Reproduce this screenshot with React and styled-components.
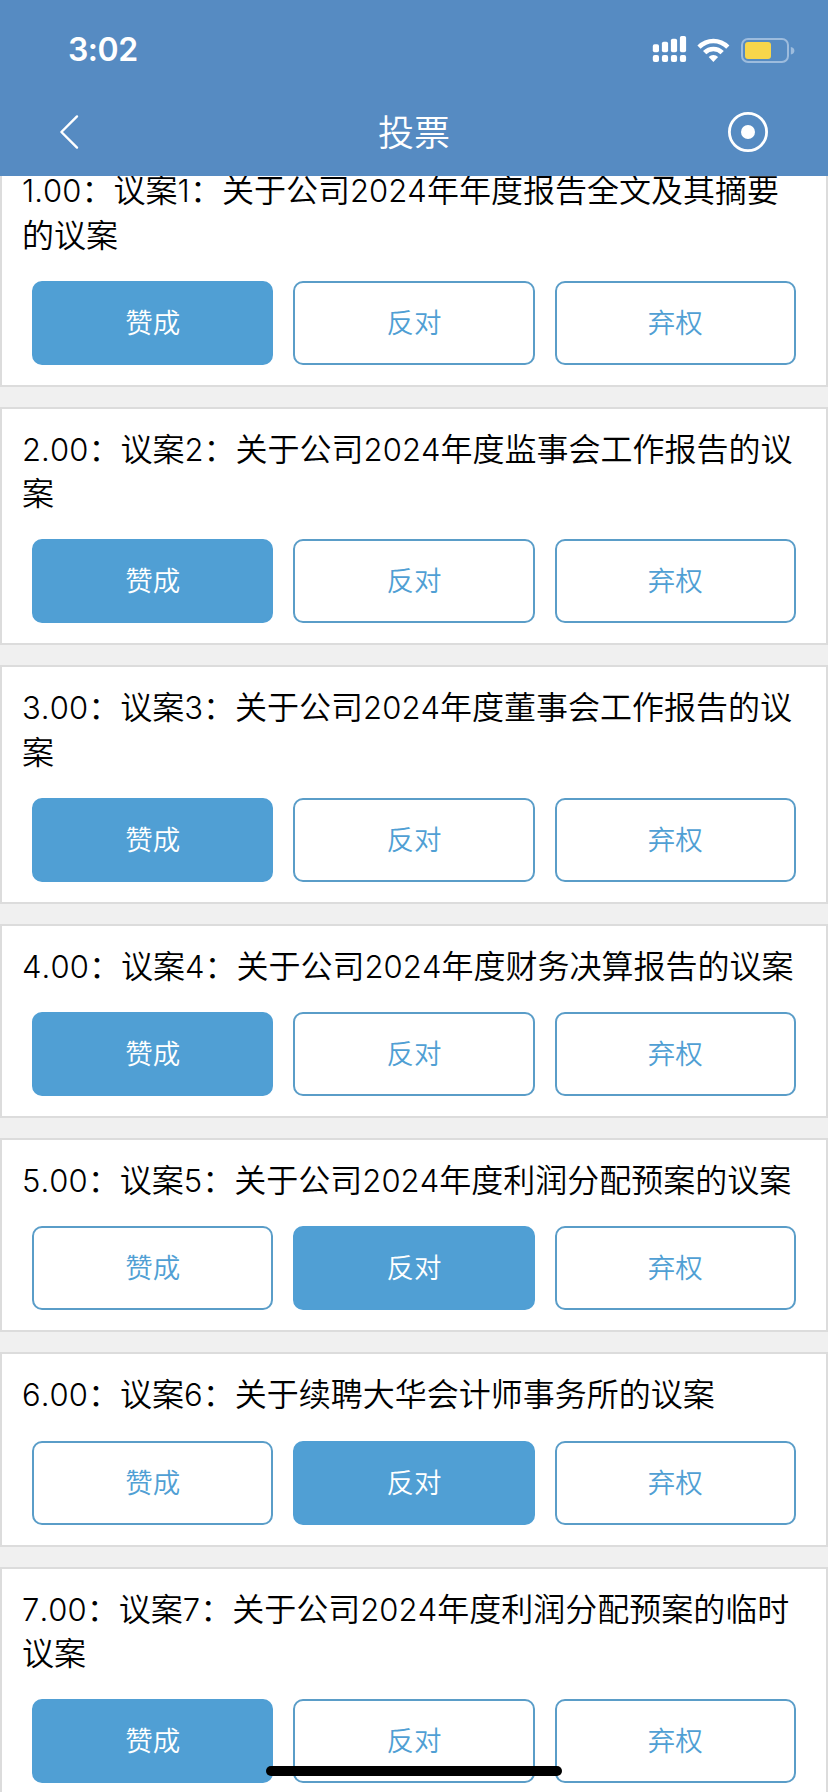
import { useState } from 'react'
import styled, { createGlobalStyle } from 'styled-components'

const GlobalStyle = createGlobalStyle`
  * {
    box-sizing: border-box;
  }
  body {
    margin: 0;
    background-color: #f0f0f0;
    font-family: "Inter", "Noto Sans CJK SC", sans-serif;
  }
`

const Pantalla = styled.div`
  position: relative;
  display: flex;
  flex-direction: column;
  width: 828px;
  height: 1792px;
  overflow: hidden;
  background-color: #f0f0f0;
`

const Header = styled.header`
  flex: none;
  height: 176px;
  background-color: #568bc2;
  color: #fff;
`

const StatusBar = styled.div`
  display: flex;
  align-items: center;
  justify-content: space-between;
  height: 88px;
  padding: 11px 33px 0 68px;
`

const Time = styled.span`
  font-size: 32px;
  font-weight: 600;
  line-height: 40px;
  letter-spacing: -0.5px;
`

const StatusIcons = styled.svg`
  display: block;
  width: 143px;
  height: 30px;
`

const NavBar = styled.div`
  display: grid;
  grid-template-columns: 160px 1fr 160px;
  align-items: center;
  height: 88px;
`

const NavButton = styled.button`
  display: flex;
  justify-content: ${({ $right }) => ($right ? 'flex-end' : 'flex-start')};
  padding: ${({ $right }) => ($right ? '0 58px 0 0' : '0 0 0 58px')};
  border: 0;
  background: none;
  color: inherit;
  cursor: pointer;
`

const Title = styled.h1`
  margin: 0;
  padding-top: 2px;
  font-size: 36px;
  font-weight: 350;
  line-height: 44px;
  text-align: center;
`

const Scroll = styled.main`
  flex: 1;
  min-height: 0;
  overflow: hidden;
`

const List = styled.div`
  display: flex;
  flex-direction: column;
  gap: 20px;
  margin-top: -27.7px;
`

const Card = styled.section`
  padding: 19px 20px 20px;
  border: 2px solid #dcdcdc;
  background-color: #fff;
`

const Question = styled.p`
  margin: 0 0 23px;
  color: #000;
  font-size: 32px;
  font-weight: 350;
  line-height: 44.25px;
`

const Num = styled.span`
  font-size: 31px;
  font-weight: 300;
  font-kerning: none;
  line-height: 1;
  letter-spacing: 0.08px;
`

const Options = styled.div`
  display: grid;
  grid-template-columns: repeat(3, 1fr);
  gap: 20px;
  padding: 0 10px;
`

const Option = styled.button`
  height: 84px;
  padding: 0;
  border: 2px solid ${({ $active }) => ($active ? '#509fd4' : '#5a9dc8')};
  border-radius: 10px;
  background-color: ${({ $active }) => ($active ? '#509fd4' : '#fff')};
  color: ${({ $active }) => ($active ? '#fff' : '#509fd4')};
  font-family: inherit;
  font-size: 27.5px;
  font-weight: 350;
  line-height: 40px;
  cursor: pointer;
`

const HomeBar = styled.div`
  position: absolute;
  left: 266px;
  bottom: 16px;
  width: 296px;
  height: 10px;
  border-radius: 5px;
  background-color: #000;
`

const choices = ['赞成', '反对', '弃权']

const proposals = [
  { id: 1, text: '关于公司2024年年度报告全文及其摘要的议案', vote: 0 },
  { id: 2, text: '关于公司2024年度监事会工作报告的议案', vote: 0 },
  { id: 3, text: '关于公司2024年度董事会工作报告的议案', vote: 0 },
  { id: 4, text: '关于公司2024年度财务决算报告的议案', vote: 0 },
  { id: 5, text: '关于公司2024年度利润分配预案的议案', vote: 1 },
  { id: 6, text: '关于续聘大华会计师事务所的议案', vote: 1 },
  { id: 7, text: '关于公司2024年度利润分配预案的临时议案', vote: 0 },
]

// digits are set a bit smaller and lighter than the CJK text
function withNumbers(text) {
  return text.split(/([\d.]+)/).map((part, i) => (i % 2 ? <Num key={i}>{part}</Num> : part))
}

function Status() {
  return (
    <StatusIcons viewBox="0 0 143 30" fill="#fff">
      <rect x="0.8" y="9.2" width="6.2" height="8" rx="1.8" />
      <rect x="9.9" y="6.8" width="6.2" height="10.4" rx="1.8" />
      <rect x="18.9" y="3.8" width="6.2" height="13.4" rx="1.8" />
      <rect x="27.9" y="1" width="6.2" height="16.2" rx="1.8" />
      <rect x="0.8" y="20.1" width="6.2" height="6.9" rx="2" />
      <rect x="9.9" y="20.1" width="6.2" height="6.9" rx="2" />
      <rect x="18.9" y="20.1" width="6.2" height="6.9" rx="2" />
      <rect x="27.9" y="20.1" width="6.2" height="6.9" rx="2" />
      <path d="M45.4 10.4 A22.4 22.4 0 0 1 77.4 10.4 L74.2 13.7 A17.9 17.9 0 0 0 48.6 13.7 Z" />
      <path d="M51 16 A14.6 14.6 0 0 1 71.8 16 L68.5 19.3 A10 10 0 0 0 54.3 19.3 Z" />
      <path d="M56.7 22 A6.8 6.8 0 0 1 66.1 22 L61.4 26.9 Z" />
      <rect x="90" y="4" width="46" height="23" rx="6" fill="none" stroke="#9dbcdd" strokeWidth="2" />
      <rect x="93" y="7" width="26" height="17" rx="3" fill="#f7d64b" />
      <path d="M138.8 12 Q142.4 12.8 142.4 15.8 Q142.4 18.8 138.8 19.6 Z" fill="#9dbcdd" />
    </StatusIcons>
  )
}

export default function App() {
  const [votes, setVotes] = useState(proposals.map((p) => p.vote))

  const handleVote = (row, choice) => {
    setVotes(votes.map((v, i) => (i === row ? choice : v)))
  }

  return (
    <Pantalla>
      <GlobalStyle />
      <Header>
        <StatusBar>
          <Time>3:02</Time>
          <Status />
        </StatusBar>
        <NavBar>
          <NavButton>
            <svg width="22" height="36" viewBox="0 0 22 36" fill="none" stroke="#fff" strokeWidth="2.4" strokeLinecap="round" strokeLinejoin="round">
              <path d="M19 2.4 L3.4 18 L19 33.6" />
            </svg>
          </NavButton>
          <Title>投票</Title>
          <NavButton $right>
            <svg width="44" height="44" viewBox="0 0 44 44">
              <circle cx="22" cy="22" r="18.6" fill="none" stroke="#fff" strokeWidth="2.8" />
              <circle cx="22" cy="22" r="7" fill="#fff" />
            </svg>
          </NavButton>
        </NavBar>
      </Header>
      <Scroll>
        <List>
          {proposals.map((item, row) => (
            <Card key={item.id}>
              <Question>{withNumbers(`${item.id}.00：议案${item.id}：${item.text}`)}</Question>
              <Options>
                {choices.map((label, i) => (
                  <Option key={label} $active={votes[row] === i} onClick={() => handleVote(row, i)}>
                    {label}
                  </Option>
                ))}
              </Options>
            </Card>
          ))}
        </List>
      </Scroll>
      <HomeBar />
    </Pantalla>
  )
}
